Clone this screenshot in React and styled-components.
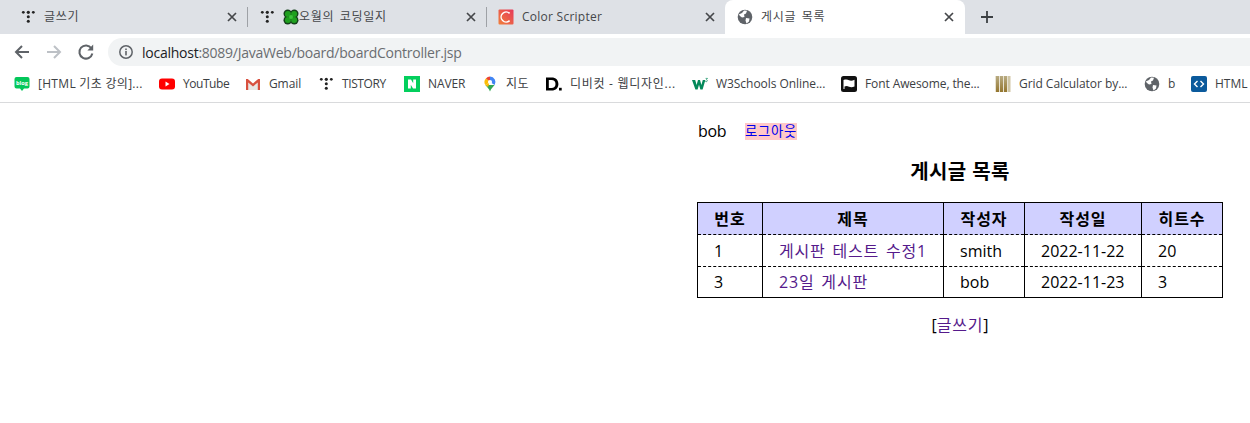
import React from 'react';
import styled, { createGlobalStyle } from 'styled-components';

const UI_FONT = `"Open Sans", "Noto Sans CJK KR", sans-serif`;

const GlobalStyle = createGlobalStyle`
  html, body {
    margin: 0;
    padding: 0;
    background: #fff;
  }
  body {
    font-family: ${UI_FONT};
    overflow: hidden;
  }
`;

const Tistory = () => (
  <svg width="16" height="16" viewBox="0 0 16 16" fill="#222">
    <circle cx="3.3" cy="3.3" r="1.4" />
    <circle cx="8.3" cy="3.3" r="1.6" />
    <circle cx="13.3" cy="3.3" r="1.4" />
    <circle cx="8.3" cy="7.8" r="1.5" />
    <circle cx="8.3" cy="12.3" r="1.5" />
  </svg>
);

const Globe = () => (
  <svg width="16" height="16" viewBox="0 0 16 16">
    <circle cx="8" cy="8" r="7.3" fill="#5f6368" />
    <path d="M1.8 5.5 L5 4 L7 1.5 L10 1.8 L9 4.5 L7 5.5 L7.5 8 L5 8.5 L3 7 Z M9 9 L12.5 9.5 L12 12.5 L9.5 14.5 L8.5 11.5 Z" fill="#fff" />
  </svg>
);

const Clover = () => (
  <svg width="16" height="16" viewBox="0 0 16 16">
    <g fill="#14401a">
      <circle cx="4.7" cy="4.7" r="4.2" />
      <circle cx="11.3" cy="4.7" r="4.2" />
      <circle cx="4.7" cy="11.3" r="4.2" />
      <circle cx="11.3" cy="11.3" r="4.2" />
    </g>
    <g fill="#1fa01f">
      <circle cx="4.9" cy="4.9" r="3" />
      <circle cx="11.1" cy="4.9" r="3" />
      <circle cx="4.9" cy="11.1" r="3" />
      <circle cx="11.1" cy="11.1" r="3" />
    </g>
    <circle cx="8" cy="8" r="2" fill="#3cc43a" />
  </svg>
);

const ColorScripter = () => (
  <svg width="16" height="16" viewBox="0 0 16 16">
    <defs>
      <linearGradient id="cs" x1="0" y1="1" x2="1" y2="0">
        <stop offset="0" stopColor="#f0803c" />
        <stop offset="1" stopColor="#e6395a" />
      </linearGradient>
    </defs>
    <rect x=".5" y=".5" width="15" height="15" rx="1" fill="url(#cs)" />
    <path d="M11.6 4.4 A5 5 0 1 0 11.6 11.6" fill="none" stroke="#fff" strokeWidth="1.5" />
  </svg>
);

const Close = () => (
  <svg width="10" height="10" viewBox="0 0 10 10" stroke="#45474a" strokeWidth="1.7" fill="none">
    <path d="M1 1 L9 9 M9 1 L1 9" />
  </svg>
);

const Blog = () => (
  <svg width="16" height="16" viewBox="0 0 16 16">
    <path d="M2.5 1 H13.5 A2 2 0 0 1 15.5 3 V10.5 A2 2 0 0 1 13.5 12.5 H10 L8 15 L6 12.5 H2.5 A2 2 0 0 1 .5 10.5 V3 A2 2 0 0 1 2.5 1 Z" fill="#03c75a" />
    <text x="8" y="9.2" textAnchor="middle" fontSize="5.6" fontWeight="700" fontFamily="Open Sans, sans-serif" fill="#fff">blog</text>
  </svg>
);

const YouTube = () => (
  <svg width="16" height="16" viewBox="0 0 16 16">
    <rect y="2.5" width="16" height="11" rx="3" fill="#f00" />
    <path d="M6.5 5.5 L10.5 8 L6.5 10.5 Z" fill="#fff" />
  </svg>
);

const Gmail = () => (
  <svg width="16" height="16" viewBox="0 0 16 16">
    <path d="M2 4 L8 8.8 L14 4 V14 H2 Z" fill="#e8e6e4" />
    <path d="M1 3 H2.8 L8 7.4 L13.2 3 H15 V14 H12.8 V6.6 L8 10.4 L3.2 6.6 V14 H1 Z" fill="#d8503f" />
  </svg>
);

const Naver = () => (
  <svg width="16" height="16" viewBox="0 0 16 16">
    <rect width="16" height="16" fill="#03cf5d" />
    <path d="M4 3.5 H7 L9.2 7.2 V3.5 H12 V12.5 H9 L6.8 8.8 V12.5 H4 Z" fill="#fff" />
  </svg>
);

const Maps = () => (
  <svg width="16" height="16" viewBox="0 0 16 16">
    <path d="M8 .5 A5.5 5.5 0 0 1 12.6 9 L8 6 Z" fill="#4285f4" />
    <path d="M8 .5 A5.5 5.5 0 0 0 3.9 2.4 L8 6 Z" fill="#ea4335" />
    <path d="M3.9 2.4 A5.5 5.5 0 0 0 3.4 9 L8 6 Z" fill="#fbbc04" />
    <path d="M3.4 9 L12.6 9 C11 11.2 9 12.5 8 15.5 C7 12.5 5 11.2 3.4 9 Z" fill="#34a853" />
    <path d="M3.4 9 L8 6 L6 11 Z" fill="#fbbc04" />
    <circle cx="8" cy="6" r="2.1" fill="#fff" />
  </svg>
);

const Dbcut = () => (
  <svg width="16" height="16" viewBox="0 0 16 16">
    <path d="M0 1.5 H5.5 C10 1.5 12.4 4.2 12.4 8 C12.4 11.8 10 14.5 5.5 14.5 H0 Z M2.8 4 V12 H5.4 C8 12 9.5 10.4 9.5 8 C9.5 5.6 8 4 5.4 4 Z" fill="#000" fillRule="evenodd" />
    <rect x="13" y="11.8" width="2.7" height="2.7" fill="#000" />
  </svg>
);

const W3 = () => (
  <svg width="16" height="16" viewBox="0 0 16 16">
    <path d="M0 4 H3.2 L4.6 9 L6 4 H8 L9.4 9 L10.8 4 H13.4 L10.6 13.4 H8.4 L7 8.8 L5.6 13.4 H3.4 Z" fill="#04895a" />
    <path d="M13.6 2.4 H15.5 L14.5 3.6 Q15.8 4 15 5.4 Q14.2 6.1 13.3 5.4" fill="none" stroke="#04895a" strokeWidth=".7" />
  </svg>
);

const FontAwesome = () => (
  <svg width="16" height="16" viewBox="0 0 16 16">
    <rect width="16" height="16" rx="2.5" fill="#111" />
    <path d="M2.5 4 C5 3 7 3.6 8 4.2 C9.5 4.9 11 4.9 13.5 3.8 V10.6 C11 11.5 9.5 11.3 8 10.7 C6.5 10 5 9.8 3.5 10.6 V13 H2.5 Z" fill="#fff" />
  </svg>
);

const GridCalc = () => (
  <svg width="16" height="16" viewBox="0 0 16 16">
    <defs>
      <linearGradient id="gold" x1="0" y1="0" x2="0" y2="1">
        <stop offset="0" stopColor="#b8ab82" />
        <stop offset="1" stopColor="#94762f" />
      </linearGradient>
    </defs>
    <rect width="16" height="16" fill="#e8e2d2" />
    <rect x="1" width="3" height="16" fill="url(#gold)" />
    <rect x="5" width="3" height="16" fill="url(#gold)" />
    <rect x="9" width="3" height="16" fill="url(#gold)" />
    <rect x="13" width="2" height="16" fill="#cfc6a6" />
  </svg>
);

const HtmlCode = () => (
  <svg width="16" height="16" viewBox="0 0 16 16">
    <rect width="16" height="16" rx="2" fill="#0b5a9c" />
    <path d="M6.5 5 L3.5 8 L6.5 11 M9.5 5 L12.5 8 L9.5 11" fill="none" stroke="#fff" strokeWidth="1.4" />
  </svg>
);

const tabs = [
  { title: '글쓰기', icon: <Tistory /> },
  { title: '오월의 코딩일지', icon: <Tistory />, clover: true },
  { title: 'Color Scripter', icon: <ColorScripter />, latin: true },
  { title: '게시글 목록', icon: <Globe />, active: true },
];

const bookmarks = [
  { label: '[HTML 기초 강의]...', icon: <Blog />, width: 105, spacing: 0.3 },
  { label: 'YouTube', icon: <YouTube />, width: 46, spacing: -0.45 },
  { label: 'Gmail', icon: <Gmail />, width: 33, spacing: -0.1 },
  { label: 'TISTORY', icon: <Tistory />, width: 46, spacing: -0.4 },
  { label: 'NAVER', icon: <Naver />, width: 38, spacing: -0.1 },
  { label: '지도', icon: <Maps />, width: 24, spacing: 0.5 },
  { label: '디비컷 - 웹디자인...', icon: <Dbcut />, width: 106, spacing: 0.7 },
  { label: 'W3Schools Online...', icon: <W3 />, width: 109, spacing: -0.05 },
  { label: 'Font Awesome, the...', icon: <FontAwesome />, width: 114, spacing: -0.1 },
  { label: 'Grid Calculator by...', icon: <GridCalc />, width: 109, spacing: -0.05 },
  { label: 'b', icon: <Globe />, width: 7, spacing: 0 },
  { label: 'HTML', icon: <HtmlCode />, width: 35, spacing: 0 },
];

const posts = [
  { id: 1, title: '게시판 테스트 수정1', writer: 'smith', date: '2022-11-22', hits: 20 },
  { id: 3, title: '23일 게시판', writer: 'bob', date: '2022-11-23', hits: 3 },
];

const columns = [
  { label: '번호', width: 65 },
  { label: '제목', width: 181 },
  { label: '작성자', width: 81 },
  { label: '작성일', width: 117 },
  { label: '히트수', width: 81 },
];

const App = () => (
  <>
    <GlobalStyle />
    <Browser>
      <TabStrip>
        {tabs.map((tab, i) => (
          <Tab key={tab.title} $active={tab.active} $divider={i < 2}>
            <TabIcon>{tab.icon}</TabIcon>
            {tab.clover && <CloverIcon><Clover /></CloverIcon>}
            <TabTitle $latin={tab.latin}>{tab.title}</TabTitle>
            <CloseButton><Close /></CloseButton>
          </Tab>
        ))}
        <NewTab>
          <svg width="14" height="14" viewBox="0 0 14 14" stroke="#3c4043" strokeWidth="1.8">
            <path d="M7 1 V13 M1 7 H13" />
          </svg>
        </NewTab>
      </TabStrip>

      <Toolbar>
        <NavButton>
          <svg width="18" height="18" viewBox="0 0 18 18" fill="none" stroke="#5f6368" strokeWidth="2">
            <path d="M16 9 H3 M9 3 L3 9 L9 15" />
          </svg>
        </NavButton>
        <NavButton>
          <svg width="18" height="18" viewBox="0 0 18 18" fill="none" stroke="#bdc1c6" strokeWidth="2">
            <path d="M2 9 H15 M9 3 L15 9 L9 15" />
          </svg>
        </NavButton>
        <NavButton>
          <svg width="18" height="18" viewBox="0 0 18 18" fill="none">
            <path d="M14.4 5.2 A6.6 6.6 0 1 0 15.4 10.6" stroke="#5f6368" strokeWidth="2" />
            <path d="M10.4 7.4 H16.2 V1.6 Z" fill="#5f6368" />
          </svg>
        </NavButton>
        <AddressBar>
          <svg width="16" height="16" viewBox="0 0 16 16" fill="none">
            <circle cx="8" cy="8" r="6.2" stroke="#5f6368" strokeWidth="1.5" />
            <rect x="7.2" y="7" width="1.6" height="4.4" fill="#5f6368" />
            <rect x="7.2" y="4.5" width="1.6" height="1.6" fill="#5f6368" />
          </svg>
          <Url>localhost<UrlRest>:8089/JavaWeb/board/boardController.jsp</UrlRest></Url>
        </AddressBar>
      </Toolbar>

      <BookmarkBar>
        {bookmarks.map((b) => (
          <Bookmark key={b.label}>
            {b.icon}
            <BookmarkLabel $width={b.width} $spacing={b.spacing}>{b.label}</BookmarkLabel>
          </Bookmark>
        ))}
      </BookmarkBar>
    </Browser>

    <Page>
      <Board>
        <UserRow>
          <UserName>bob</UserName>
          <Logout href="#logout">로그아웃</Logout>
        </UserRow>
        <Heading>게시글 목록</Heading>
        <BoardTable>
          <colgroup>
            {columns.map((c) => <col key={c.label} style={{ width: c.width }} />)}
          </colgroup>
          <thead>
            <tr>
              {columns.map((c) => <HeadCell key={c.label}>{c.label}</HeadCell>)}
            </tr>
          </thead>
          <tbody>
            {posts.map((p) => (
              <tr key={p.id}>
                <Cell>{p.id}</Cell>
                <Cell><PostLink href="#post">{p.title}</PostLink></Cell>
                <Cell>{p.writer}</Cell>
                <Cell>{p.date}</Cell>
                <Cell>{p.hits}</Cell>
              </tr>
            ))}
          </tbody>
        </BoardTable>
        <WriteRow>[<PostLink href="#write">글쓰기</PostLink>]</WriteRow>
      </Board>
    </Page>
  </>
);

export default App;

const Browser = styled.header`
  background: #fff;
  border-bottom: 1px solid #d9dadc;
`;

const TabStrip = styled.div`
  display: flex;
  align-items: stretch;
  height: 34px;
  padding-left: 8px;
  background: #dee1e6;
`;

const Tab = styled.div`
  position: relative;
  display: flex;
  align-items: center;
  box-sizing: border-box;
  width: ${(p) => (p.$active ? '240px' : '239px')};
  padding: 0 ${(p) => (p.$active ? '8px' : '7px')} 0 12px;
  border-radius: 8px 8px 0 0;
  background: ${(p) => (p.$active ? '#fff' : 'transparent')};
  color: #45474a;

  ${(p) => p.$divider && `
    &::after {
      content: '';
      position: absolute;
      right: -1px;
      top: 7px;
      bottom: 7px;
      width: 1px;
      background: #9ea1a6;
    }
  `}
`;

const TabIcon = styled.span`
  display: flex;
  flex: none;
  width: 16px;
  height: 16px;
  margin-right: 8px;
`;

const CloverIcon = styled.span`
  display: flex;
  flex: none;
  width: 16px;
  height: 16px;
`;

const TabTitle = styled.span`
  flex: 1;
  font-size: 12px;
  line-height: 16px;
  letter-spacing: ${(p) => (p.$latin ? '0.25px' : '0.75px')};
  word-spacing: ${(p) => (p.$latin ? '0' : '1.5px')};
  white-space: nowrap;
  overflow: hidden;
`;

const CloseButton = styled.span`
  display: flex;
  flex: none;
  align-items: center;
  justify-content: center;
  width: 16px;
  height: 16px;
`;

const NewTab = styled.div`
  display: flex;
  align-items: center;
  justify-content: center;
  width: 44px;
`;

const Toolbar = styled.div`
  display: flex;
  align-items: center;
  box-sizing: border-box;
  height: 32px;
  padding-top: 4px;
  background: #fff;
`;

const NavButton = styled.span`
  display: flex;
  flex: none;
  align-items: center;
  justify-content: center;
  width: 32px;
  height: 28px;

  &:first-child {
    margin-left: 6px;
  }
`;

const AddressBar = styled.div`
  display: flex;
  flex: 1;
  align-items: center;
  gap: 8px;
  height: 28px;
  margin-left: 6px;
  padding-left: 10px;
  border-radius: 14px 0 0 14px;
  background: #f1f3f4;
`;

const Url = styled.span`
  font-size: 14px;
  letter-spacing: -0.25px;
  color: #202124;
  white-space: nowrap;
`;

const UrlRest = styled.span`
  color: #6a6d71;
`;

const BookmarkBar = styled.nav`
  display: flex;
  align-items: center;
  gap: 16px;
  height: 36px;
  padding-left: 14px;
  overflow: hidden;
  background: #fff;
`;

const Bookmark = styled.a`
  display: flex;
  flex: none;
  align-items: center;
  gap: 8px;
`;

const BookmarkLabel = styled.span`
  width: ${(p) => p.$width}px;
  font-size: 12px;
  line-height: 16px;
  letter-spacing: ${(p) => p.$spacing}px;
  color: #3c4043;
  white-space: nowrap;
`;

const Page = styled.main`
  display: flex;
  justify-content: flex-end;
  padding-right: 27px;
`;

const Board = styled.section`
  width: 526px;
  color: #000;
`;

const UserRow = styled.div`
  display: flex;
  align-items: center;
  height: 20px;
  margin-top: 18px;
`;

const UserName = styled.span`
  width: 48px;
  font-size: 16px;
  letter-spacing: -0.3px;
  padding-left: 1px;
  box-sizing: border-box;
`;

const Logout = styled.a`
  background: #ffc8c8;
  color: #0000ee;
  font-size: 13.33px;
  letter-spacing: 0.75px;
  line-height: 17px;
  text-decoration: none;
`;

const Heading = styled.h2`
  margin: 16px 0 0;
  font-size: 20px;
  line-height: 30px;
  font-weight: 700;
  letter-spacing: 0.4px;
  text-align: center;
`;

const BoardTable = styled.table`
  width: 526px;
  margin-top: 15px;
  table-layout: fixed;
  border-collapse: collapse;
  border: 1px solid #000;
`;

const HeadCell = styled.th`
  height: 31px;
  padding: 0;
  background: #d0d0ff;
  border-left: 1px solid #000;
  border-bottom: 1px dashed #000;
  font-size: 16px;
  font-weight: 700;
  line-height: 20px;
  letter-spacing: 1px;
  text-align: center;
`;

const Cell = styled.td`
  height: 31px;
  padding: 0 0 0 16px;
  border-left: 1px solid #000;
  border-bottom: 1px dashed #000;
  font-size: 16px;
  line-height: 20px;
  white-space: nowrap;

  tr:last-child & {
    height: 30px;
    border-bottom: 1px solid #000;
  }
`;

const PostLink = styled.a`
  color: #551a8b;
  letter-spacing: 0.8px;
  word-spacing: 2px;
  text-decoration: none;
`;

const WriteRow = styled.p`
  margin: 17px 0 0;
  font-size: 16px;
  line-height: 20px;
  text-align: center;
`;
